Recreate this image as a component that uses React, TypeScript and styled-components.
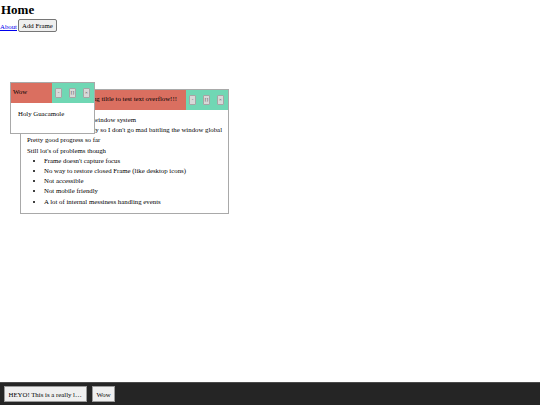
import * as React from "react";
import styled, { createGlobalStyle } from "styled-components";

const GlobalStyle = createGlobalStyle`
    html, body {
        margin: 0;
        padding: 0;
        height: 100%;
    }
    body {
        font-family: "Liberation Serif", "Times New Roman", serif;
        font-size: 6.8px;
        color: #000;
        background: #fff;
    }
    #root {
        height: 100%;
    }
`;

const Page = styled.div`
    position: relative;
    display: flex;
    flex-direction: column;
    height: 100vh;
    overflow: hidden;
`;

const Header = styled.header`
    padding-left: 1px;
`;

const Title = styled.h1`
    margin: 0;
    padding-top: 1px;
    font-size: 13px;
    line-height: 17px;
    font-weight: bold;
`;

const Nav = styled.nav`
    display: flex;
    align-items: center;
    margin-left: -1px;
    margin-top: 1px;
`;

const NavLink = styled.a`
    color: #0000ee;
    text-decoration: underline;
    line-height: 9px;
    margin-top: 1px;
`;

const NavButton = styled.button`
    font-family: inherit;
    font-size: 6.8px;
    height: 13px;
    padding: 0 3px;
    margin-left: 1px;
    background: #efefef;
    color: #000;
    border: 1px solid #767676;
    border-radius: 2px;
`;

const Desktop = styled.main`
    flex: 1;
`;

const Frame = styled.div<{ $z: number }>`
    position: absolute;
    z-index: ${(p) => p.$z};
    background: #fff;
    border: 1px solid #a9a9a9;
    box-sizing: border-box;
    display: flex;
    flex-direction: column;
`;

const TitleBar = styled.div`
    display: flex;
    height: 20px;
    flex-shrink: 0;
`;

const FrameTitle = styled.div`
    flex: 1;
    min-width: 0;
    background: #da6f60;
    padding: 0 2px;
    line-height: 18px;
    white-space: nowrap;
    overflow: hidden;
    text-overflow: ellipsis;
`;

const Controls = styled.div`
    display: flex;
    align-items: center;
    gap: 7px;
    padding: 0 4px 0 3px;
    background: #70d7b4;
`;

const ControlButton = styled.button`
    width: 7px;
    height: 10px;
    padding: 0;
    box-sizing: border-box;
    background: #d8d8d8;
    border: 1px solid #a5a5a5;
    border-radius: 1px;
    font-family: inherit;
    font-size: 5px;
    line-height: 8px;
    color: #333;
    text-align: center;
    overflow: hidden;
`;

const FrameBody = styled.div<{ $pad: string }>`
    flex: 1;
    padding: ${(p) => p.$pad};
    overflow: hidden;
    line-height: 10.2px;
    white-space: nowrap;
`;

const Line = styled.div``;

const BulletList = styled.ul`
    margin: 0;
    padding-left: 17px;
`;

const Taskbar = styled.footer`
    flex-shrink: 0;
    height: 23px;
    box-sizing: border-box;
    background: #252525;
    border-top: 1px solid #4b4b4b;
    display: flex;
    align-items: center;
    gap: 5px;
    padding: 0 4px;
`;

const TaskButton = styled.button`
    height: 16px;
    max-width: 83px;
    padding: 0 3.5px;
    font-family: inherit;
    font-size: 6.8px;
    color: #000;
    background: #efefef;
    border: 1px solid #9a9a9a;
    border-radius: 0;
    white-space: nowrap;
    overflow: hidden;
    text-overflow: ellipsis;
`;

interface FrameData {
    id: number;
    title: string;
    left: number;
    top: number;
    width: number;
    height: number;
    z: number;
    pad: string;
    body: React.ReactNode;
}

const bigTitle = "HEYO! This is a really long tiltle to test text overflow!!!";

const frames: FrameData[] = [
    {
        id: 1,
        title: bigTitle,
        left: 20,
        top: 89,
        width: 209,
        height: 125,
        z: 1,
        pad: "5px 6px 0 6px",
        body: (
            <>
                <Line>Building a super simple window system</Line>
                <Line>Writing this thingy mostly so I don't go mad battling the window global</Line>
                <Line>Pretty good progress so far</Line>
                <Line>Still lot's of problems though</Line>
                <BulletList>
                    <li>Frame doesn't capture focus</li>
                    <li>No way to restore closed Frame (like desktop icons)</li>
                    <li>Not accessible</li>
                    <li>Not mobile friendly</li>
                    <li>A lot of internal messiness handling events</li>
                </BulletList>
            </>
        ),
    },
    {
        id: 2,
        title: "Wow",
        left: 10,
        top: 82,
        width: 85,
        height: 52,
        z: 2,
        pad: "6px 7px",
        body: <Line>Holy Guacamole</Line>,
    },
];

export default function App() {
    return (
        <Page>
            <GlobalStyle />
            <Header>
                <Title>Home</Title>
                <Nav>
                    <NavLink href="#">About</NavLink>
                    <NavButton>Add Frame</NavButton>
                </Nav>
            </Header>
            <Desktop>
                {frames.map((f) => (
                    <Frame
                        key={f.id}
                        $z={f.z}
                        style={{ left: f.left, top: f.top, width: f.width, height: f.height }}
                    >
                        <TitleBar>
                            <FrameTitle>{f.title}</FrameTitle>
                            <Controls>
                                <ControlButton>-</ControlButton>
                                <ControlButton>[]</ControlButton>
                                <ControlButton>×</ControlButton>
                            </Controls>
                        </TitleBar>
                        <FrameBody $pad={f.pad}>{f.body}</FrameBody>
                    </Frame>
                ))}
            </Desktop>
            <Taskbar>
                {frames.map((f) => (
                    <TaskButton key={f.id}>{f.title}</TaskButton>
                ))}
            </Taskbar>
        </Page>
    );
}
